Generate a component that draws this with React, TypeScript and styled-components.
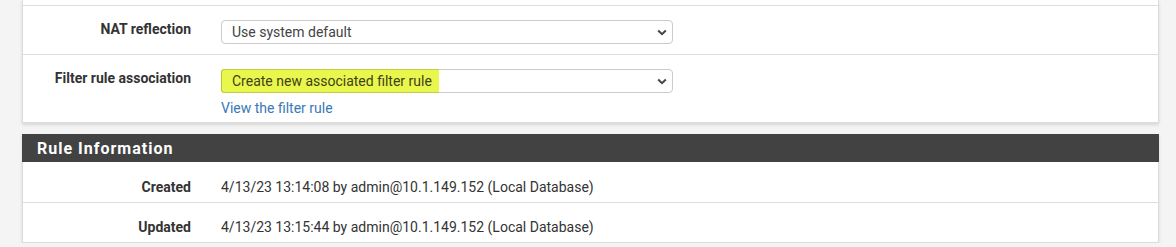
import React from "react";
import styled, { createGlobalStyle } from "styled-components";

const GlobalStyle = createGlobalStyle`
  html, body {
    margin: 0;
    padding: 0;
    background: #f4f4f4;
    font-family: Roboto, "Liberation Sans", Arial, sans-serif;
    font-size: 14px;
    color: #333;
  }
`;

const Page = styled.div`
  padding: 0 17px 0 22px;
  display: flex;
  flex-direction: column;
  gap: 11px;
`;

const Panel = styled.section`
  background: #fff;
  border: 1px solid #dcdcdc;
  border-top: none;
  box-shadow: 0 2px 3px rgba(0, 0, 0, 0.12);
`;

const ClippedRow = styled.div`
  height: 5px;
`;

const Header = styled.div`
  background: #424242;
  height: 28px;
  display: flex;
  align-items: center;
  padding-left: 15px;
  margin: 0 -1px;
  color: #fff;
  font-weight: 700;
  font-size: 16px;
  letter-spacing: 1px;
`;

const Row = styled.div<{ $first?: boolean; $pt: number; $pb: number }>`
  display: flex;
  align-items: flex-start;
  border-top: ${(p) => (p.$first ? "none" : "1px solid #dedede")};
  padding: ${(p) => p.$pt}px 0 ${(p) => p.$pb}px;
`;

const Label = styled.div`
  width: 168px;
  margin-right: 30px;
  text-align: right;
  font-weight: 700;
  line-height: 18px;
  color: #333;
`;

const InfoLabel = styled(Label)`
  line-height: 20px;
`;

const Value = styled.div`
  line-height: 20px;
  color: #333;
`;

const Field = styled.div`
  display: flex;
  flex-direction: column;
  width: 452px;
`;

const SelectBox = styled.div`
  box-sizing: border-box;
  height: 24px;
  border: 1px solid #cbcbcb;
  border-radius: 4px;
  display: flex;
  align-items: center;
  justify-content: space-between;
  color: #444;
  background: #fff;
  position: relative;
`;

const SelectText = styled.span<{ $hl?: boolean }>`
  align-self: stretch;
  display: flex;
  align-items: center;
  padding: 0 ${(p) => (p.$hl ? "7px" : "0")} 0 10px;
  ${(p) =>
    p.$hl
      ? `
    margin: -1px 0 -1px -1px;
    padding-left: 11px;
    background: #e9f74c;
    border-radius: 4px 0 0 4px;
    box-shadow: inset 1px 0 0 #b9c43a, inset 0 1px 0 #c2cd45, inset 0 -1px 0 #c2cd45;
    color: #3f3f1a;
  `
      : ""}
`;

const Chevron = styled.svg`
  width: 10px;
  height: 7px;
  margin-right: 5px;
  flex: none;
`;

const Link = styled.a`
  color: #3a78b6;
  text-decoration: none;
  line-height: 20px;
  margin-top: 5px;
  cursor: pointer;
`;

const Select: React.FC<{ text: string; highlight?: boolean }> = ({ text, highlight }) => (
  <SelectBox>
    <SelectText $hl={highlight}>{text}</SelectText>
    <Chevron viewBox="0 0 10 7">
      <polyline points="1.2,1.5 5,5.2 8.8,1.5" fill="none" stroke="#444" strokeWidth="2" />
    </Chevron>
  </SelectBox>
);

export default function App() {
  return (
    <>
      <GlobalStyle />
      <Page>
        <Panel>
          <ClippedRow />
          <Row $pt={14} $pb={10}>
            <Label>NAT reflection</Label>
            <Field>
              <Select text="Use system default" />
            </Field>
          </Row>
          <Row $pt={14} $pb={4}>
            <Label>Filter rule association</Label>
            <Field>
              <Select text="Create new associated filter rule" highlight />
              <Link>View the filter rule</Link>
            </Field>
          </Row>
        </Panel>
        <Panel>
          <Header>Rule Information</Header>
          <Row $first $pt={15} $pb={5}>
            <InfoLabel>Created</InfoLabel>
            <Value>4/13/23 13:14:08 by admin@10.1.149.152 (Local Database)</Value>
          </Row>
          <Row $pt={14} $pb={5}>
            <InfoLabel>Updated</InfoLabel>
            <Value>4/13/23 13:15:44 by admin@10.1.149.152 (Local Database)</Value>
          </Row>
        </Panel>
      </Page>
    </>
  );
}
